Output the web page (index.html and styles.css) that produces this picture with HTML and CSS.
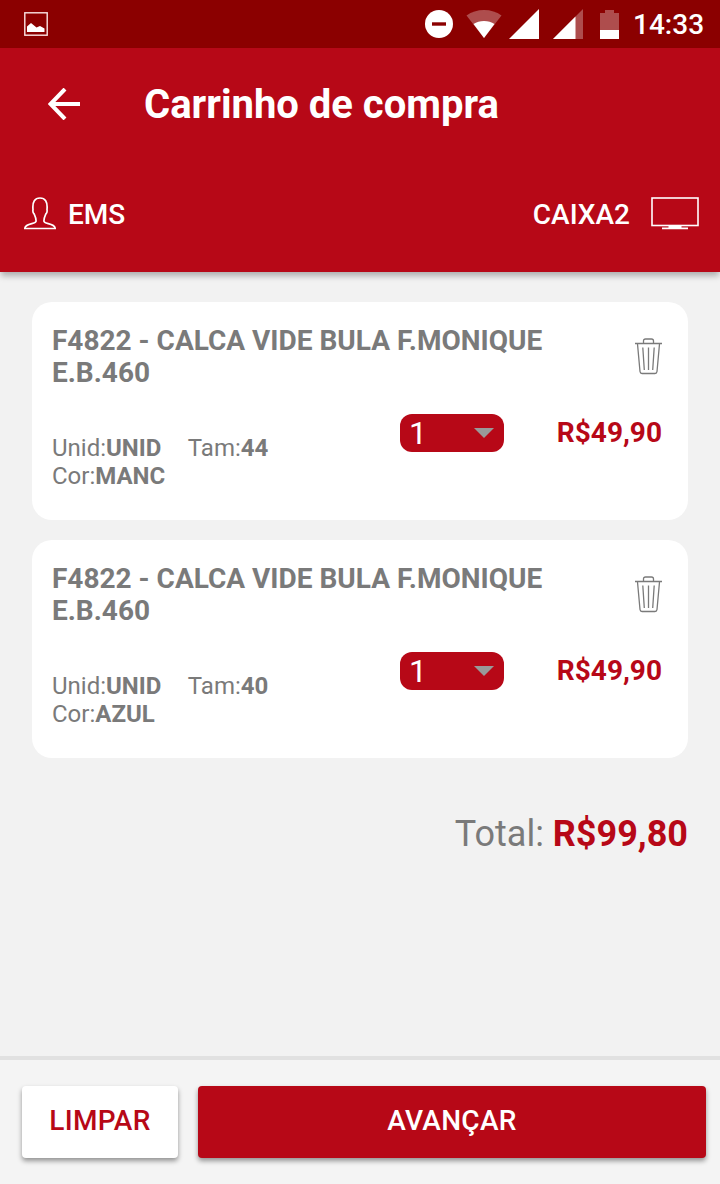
FILE: index.html
```html
<!DOCTYPE html>
<html lang="pt-BR">
  <head>
    <meta charset="utf-8">
    <title>Carrinho de compra</title>
    <link rel="stylesheet" href="styles.css">
  </head>

  <body>
    <div class="statusbar">
      <svg class="picture" width="24" height="24" viewBox="0 0 24 24">
        <rect x=".8" y=".8" width="22.400" height="22.400" fill="none" stroke="#fbe3e3" stroke-width="1.400"/>
        <path d="M3 20v-5.500l4-3.500 5.500 4.500 3.500-1.500 4.500 2.500V20z" fill="#fff"/>
      </svg>
      <svg class="dnd" width="28" height="28" viewBox="0 0 28 28">
        <circle cx="14" cy="14" r="14" fill="#fff"/>
        <rect x="7" y="12.300" width="14" height="3.400" fill="#8b0000"/>
      </svg>
      <svg class="wifi" width="36" height="28" viewBox="0 0 36 28">
        <path d="M18 28L.5 5.500Q8 0 18 0t17.500 5.500z" fill="#fff" fill-opacity=".3"/>
        <path d="M18 28L7.500 14Q12 11 18 11t10.500 3z" fill="#fff"/>
      </svg>
      <svg class="signal" width="30" height="30" viewBox="0 0 30 30">
        <path d="M0 30L30 0v30z" fill="#fff"/>
      </svg>
      <svg class="signal2" width="30" height="30" viewBox="0 0 30 30">
        <path d="M0 30L30 0v30z" fill="#fff" fill-opacity=".3"/>
        <path d="M0 30L22.500 7.500V30z" fill="#fff"/>
      </svg>
      <svg class="battery" width="19" height="29" viewBox="0 0 19 29">
        <path d="M0 3h5V0h9v3h5v17H0z" fill="#fff" fill-opacity=".3"/>
        <rect x="0" y="20" width="19" height="9" fill="#fff"/>
      </svg>
      <span class="clock">14:33</span>
    </div>

    <div class="header">
      <div class="toolbar">
        <svg class="back" width="32" height="32" viewBox="0 0 32 32">
          <path d="M32 16H3M17 1L2.500 16 17 31" fill="none" stroke="#fff" stroke-width="4"/>
        </svg>
        <h1>Carrinho de compra</h1>
      </div>
      <div class="session">
        <svg class="user" width="32" height="33" viewBox="0 0 32 33">
          <path d="M.8 31.500h30.400c-.3-3-3-4-7-4.900-3-.6-4.300-1-4.300-2.500 0-3.500 1-5 2-7.200 1.200-1 1.400-2.600 1.100-4.300C23.800 4.500 21 1 16 1S8.200 4.500 9 12.600c-.3 1.700-.1 3.300 1.100 4.300 1 2.200 2 3.700 2 7.200 0 1.500-1.300 1.900-4.300 2.500-4 .9-6.700 1.900-7 4.900z" fill="none" stroke="#fff" stroke-width="1.700"/>
        </svg>
        <span class="name">EMS</span>
        <span class="register">CAIXA2</span>
        <svg class="monitor" width="48" height="33" viewBox="0 0 48 33">
          <rect x="1" y="1" width="46" height="27.500" fill="none" stroke="#fff" stroke-width="1.600"/>
          <path d="M17.500 28h13v2.500H37v1.800H11v-1.800h6.500z" fill="#fff"/>
        </svg>
      </div>
    </div>

    <div class="content">
      <div class="card">
        <div class="top">
          <div class="product">F4822 - CALCA VIDE BULA F.MONIQUE E.B.460</div>
          <svg class="trash" width="27" height="37" viewBox="0 0 27 37">
            <path d="M0 5.500h27M8.500 5V3q0-2 2-2h6q2 0 2 2v2M2.500 6l2.500 27.500q.2 2 2 2h13q1.800 0 2-2L24.500 6M7.800 9.500l1.500 22.500M13.500 9.500V32M19.200 9.500L17.700 32" fill="none" stroke="#7a7a7a" stroke-width="1.300"/>
          </svg>
        </div>
        <div class="bottom">
          <div class="details">
            <span class="unit">Unid:<b>UNID</b></span>
            <span>Tam:<b>44</b></span>
            <div>Cor:<b>MANC</b></div>
          </div>
          <div class="qty">1<span class="caret"></span></div>
          <div class="price">R$49,90</div>
        </div>
      </div>

      <div class="card">
        <div class="top">
          <div class="product">F4822 - CALCA VIDE BULA F.MONIQUE E.B.460</div>
          <svg class="trash" width="27" height="37" viewBox="0 0 27 37">
            <path d="M0 5.500h27M8.500 5V3q0-2 2-2h6q2 0 2 2v2M2.500 6l2.500 27.500q.2 2 2 2h13q1.800 0 2-2L24.500 6M7.800 9.500l1.500 22.500M13.500 9.500V32M19.200 9.500L17.700 32" fill="none" stroke="#7a7a7a" stroke-width="1.300"/>
          </svg>
        </div>
        <div class="bottom">
          <div class="details">
            <span class="unit">Unid:<b>UNID</b></span>
            <span>Tam:<b>40</b></span>
            <div>Cor:<b>AZUL</b></div>
          </div>
          <div class="qty">1<span class="caret"></span></div>
          <div class="price">R$49,90</div>
        </div>
      </div>

      <div class="total">Total: <b>R$99,80</b></div>
    </div>

    <div class="footer">
      <button class="btn clear" type="button">LIMPAR</button>
      <button class="btn next" type="button">AVANÇAR</button>
    </div>
  </body>
</html>
```
FILE: styles.css
```css
* { box-sizing: border-box; }

body {
  margin: 0;
  height: 1184px;
  display: flex;
  flex-direction: column;
  background: #f2f2f2;
  color: #7a7a7a;
  font-family: Roboto, sans-serif;
}

svg { display: block; flex: none; }

/* status bar */
.statusbar {
  display: flex;
  align-items: center;
  height: 48px;
  padding: 0 16px 0 24px;
  background: #8b0000;
  color: #fff;
}
.dnd { margin-left: auto; }
.wifi { margin-left: 13px; }
.signal { margin-left: 7px; }
.signal2 { margin-left: 14px; }
.battery { margin-left: 17px; }
.clock { width: 71px; margin-left: 14px; padding-top: 2px; font-size: 28px; font-weight: 500; line-height: 34px; white-space: nowrap; }

/* header */
.header {
  height: 224px;
  background: #b70817;
  color: #fff;
  box-shadow: 0 5px 6px -1px rgba(0, 0, 0, .28);
}
.toolbar { display: flex; align-items: center; height: 112px; padding-left: 48px; }
.toolbar h1 { margin: 0 0 0 64px; padding-top: 1px; font-size: 40px; font-weight: 700; line-height: 48px; }
.session {
  display: flex;
  align-items: center;
  height: 106px;
  padding: 0 21px 0 24px;
  font-size: 28px;
  font-weight: 500;
}
.name { margin-left: 12px; padding-top: 2px; }
.register { margin-left: auto; margin-right: 21px; padding-top: 2px; }

/* cart */
.content { flex: 1; padding: 30px 32px 0; }
.card {
  height: 218px;
  margin-bottom: 20px;
  padding: 23px 26px 0 20px;
  background: #fff;
  border-radius: 20px;
}
.top { display: flex; justify-content: space-between; height: 89px; }
.product { width: 510px; font-size: 28px; font-weight: 700; line-height: 32px; }
.trash { margin-top: 13px; }
.bottom { display: flex; align-items: flex-start; }
.details { width: 348px; padding-top: 20px; font-size: 24px; line-height: 28px; }
.unit { margin-right: 21px; }
.qty {
  display: flex;
  align-items: center;
  justify-content: space-between;
  width: 104px;
  height: 38px;
  padding: 0 10px 0 9px;
  border-radius: 12px;
  background: #b70817;
  color: #fff;
  font-size: 32px;
}
.caret { border: 10px solid transparent; border-top-color: #999; border-bottom: 0; }
.price { margin-left: auto; color: #b70817; font-size: 28px; font-weight: 700; line-height: 37px; }
.total { margin-top: 55px; text-align: right; font-size: 36px; line-height: 42px; }
.total b { color: #b70817; }

/* footer */
.footer {
  display: flex;
  gap: 20px;
  height: 128px;
  padding: 26px 14px 26px 22px;
  border-top: 4px solid #e1e1e1;
  background: #f4f4f4;
}
.btn {
  padding: 0 0 4px;
  border: 0;
  border-radius: 4px;
  font-family: inherit;
  font-size: 28px;
  font-weight: 500;
  letter-spacing: .3px;
  box-shadow: 0 3px 5px rgba(0, 0, 0, .4);
}
.clear { width: 156px; background: #fff; color: #b70817; }
.next { flex: 1; background: #b70817; color: #fff; }
```
